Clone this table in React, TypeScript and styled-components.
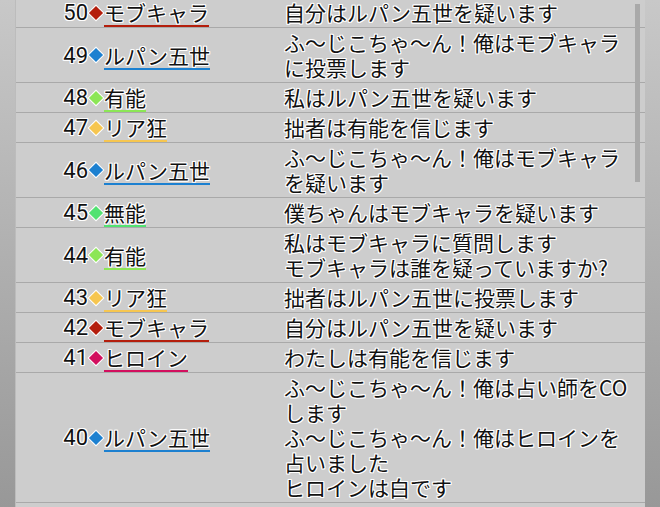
import React from "react";
import styled, { createGlobalStyle } from "styled-components";

type Role = "mob" | "lupin" | "yuno" | "riakyo" | "muno" | "heroine";

interface ILogRow {
    no: number;
    role: Role;
    lines: string[];
}

const ROLE_NAME: Record<Role, string> = {
    mob: "モブキャラ",
    lupin: "ルパン五世",
    yuno: "有能",
    riakyo: "リア狂",
    muno: "無能",
    heroine: "ヒロイン",
};

const ROLE_COLOR: Record<Role, string> = {
    mob: "#b41e0c",
    lupin: "#1c80d0",
    yuno: "#8ce656",
    riakyo: "#f6c650",
    muno: "#52e272",
    heroine: "#d20f5e",
};

const LOG: ILogRow[] = [
    { no: 50, role: "mob", lines: ["自分はルパン五世を疑います"] },
    { no: 49, role: "lupin", lines: ["ふ～じこちゃ～ん！俺はモブキャラに投票します"] },
    { no: 48, role: "yuno", lines: ["私はルパン五世を疑います"] },
    { no: 47, role: "riakyo", lines: ["拙者は有能を信じます"] },
    { no: 46, role: "lupin", lines: ["ふ～じこちゃ～ん！俺はモブキャラを疑います"] },
    { no: 45, role: "muno", lines: ["僕ちゃんはモブキャラを疑います"] },
    { no: 44, role: "yuno", lines: ["私はモブキャラに質問します", "モブキャラは誰を疑っていますか?"] },
    { no: 43, role: "riakyo", lines: ["拙者はルパン五世に投票します"] },
    { no: 42, role: "mob", lines: ["自分はルパン五世を疑います"] },
    { no: 41, role: "heroine", lines: ["わたしは有能を信じます"] },
    {
        no: 40,
        role: "lupin",
        lines: [
            "ふ～じこちゃ～ん！俺は占い師をCOします",
            "ふ～じこちゃ～ん！俺はヒロインを占いました",
            "ヒロインは白です",
        ],
    },
];

const App: React.FunctionComponent = () => {
    return (
        <>
            <GlobalStyle />
            <Page>
                <Panel>
                    {LOG.map((row) => (
                        <Row key={`log_${row.no}`}>
                            <Speaker>
                                <Num>{row.no}</Num>
                                <Diamond $color={ROLE_COLOR[row.role]} />
                                <Name $color={ROLE_COLOR[row.role]}>{ROLE_NAME[row.role]}</Name>
                            </Speaker>
                            <Message>
                                {row.lines.map((line, i) => (
                                    <span key={i}>{line}</span>
                                ))}
                            </Message>
                        </Row>
                    ))}
                    <ScrollThumb />
                </Panel>
            </Page>
        </>
    );
};

const GlobalStyle = createGlobalStyle`
    html, body {
        margin: 0;
        padding: 0;
        height: 100%;
        overflow: hidden;
    }
    body {
        font-family: "Noto Sans CJK JP", "Noto Sans", sans-serif;
        background: linear-gradient(#c8c8c8, #989898);
    }
`;

const Page = styled.div`
    height: 507px;
    padding: 0 15px;
    overflow: hidden;
`;

const Panel = styled.div`
    position: relative;
    margin-top: -2px;
    min-height: 520px;
    background: #cdcdcd;
    border-left: 1px solid #bcbcbc;
`;

const Row = styled.div`
    display: grid;
    grid-template-columns: 268px 1fr;
    padding: 2px 0;
    border-bottom: 1px solid #a9a9a9;

    &:last-of-type {
        border-bottom: 2px solid #a4a4a4;
    }
`;

const outline = `
    text-shadow:
        1px 0 0 #fff, -1px 0 0 #fff, 0 1px 0 #fff, 0 -1px 0 #fff,
        1px 1px 0 #fff, -1px -1px 0 #fff, 1px -1px 0 #fff, -1px 1px 0 #fff;
`;

const Speaker = styled.div`
    display: flex;
    align-items: center;
    padding-left: 45px;
    font-size: 21px;
    color: #111;
    ${outline}
`;

const Num = styled.span`
    width: 27px;
    text-align: right;
    font-family: Roboto, "Noto Sans", sans-serif;
    font-size: 22px;
    line-height: 25px;
`;

const Diamond = styled.span<{ $color: string }>`
    width: 10px;
    height: 10px;
    margin: 0 3px 0 3px;
    background: ${(p) => p.$color};
    transform: rotate(45deg);
    box-shadow: 0 0 0 1px #fff;
`;

const Name = styled.span<{ $color: string }>`
    display: inline-block;
    line-height: 25px;
    margin-bottom: -2px;
    border-bottom: 2px solid ${(p) => p.$color};
`;

const Message = styled.div`
    display: flex;
    flex-direction: column;
    width: 350px;
    font-size: 21px;
    line-height: 25px;
    color: #111;
    ${outline}
`;

const ScrollThumb = styled.div`
    position: absolute;
    top: 6px;
    left: 619px;
    width: 5px;
    height: 178px;
    background: #a9a9a9;
`;

export default App;
